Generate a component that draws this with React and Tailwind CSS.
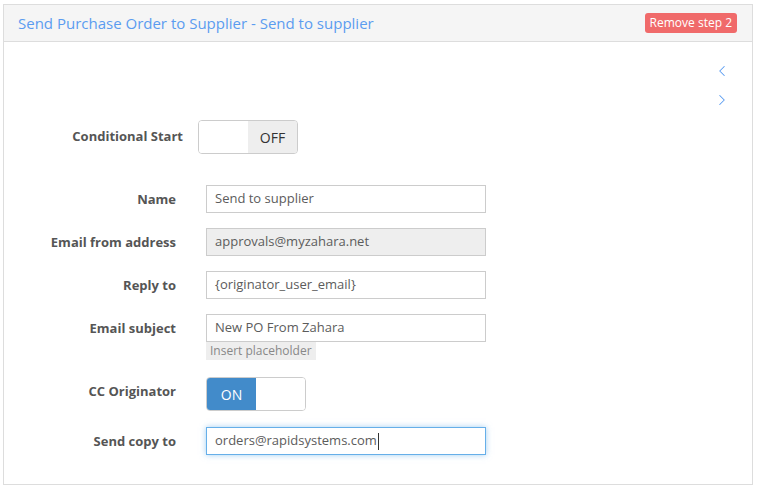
import { ChevronLeft, ChevronRight } from "lucide-react";

const fields = [
  { label: "Name", value: "Send to supplier" },
  { label: "Email from address", value: "approvals@myzahara.net", disabled: true },
  { label: "Reply to", value: "{originator_user_email}" },
];

function Toggle({ on }) {
  return (
    <div className="flex h-[34px] w-[100px] overflow-hidden rounded-[4px] border border-[#ccc] text-[14px]">
      {on ? (
        <>
          <span className="flex w-1/2 items-center justify-center bg-[#428bca] text-white">ON</span>
          <span className="w-1/2 bg-white" />
        </>
      ) : (
        <>
          <span className="w-1/2 bg-white" />
          <span className="flex w-1/2 items-center justify-center bg-[#eee] text-[#333]">OFF</span>
        </>
      )}
    </div>
  );
}

function Row({ label, children, className = "" }) {
  return (
    <div className={`flex items-start ${className}`}>
      <label className="w-[172px] shrink-0 pt-[5px] text-right text-[13px] font-bold text-[#555]">
        {label}
      </label>
      <div className="ml-[30px]">{children}</div>
    </div>
  );
}

function Input({ value, disabled, focused }) {
  return (
    <div
      className={`flex h-[28px] w-[280px] items-center border px-[8px] text-[13px] text-[#5c5c5c] ${
        disabled ? "bg-[#eee]" : "bg-white"
      } ${
        focused
          ? "border-[#66afe9] shadow-[0_0_6px_rgba(102,175,233,0.6)]"
          : "border-[#ccc]"
      }`}
    >
      {value}
      {focused && <span className="ml-[1px] h-[17px] w-px bg-[#333]" />}
    </div>
  );
}

export default function App() {
  return (
    <div className="h-[489px] w-[757px] bg-white pl-[3px] pt-[4px] font-['Open_Sans',sans-serif]">
      <div className="h-[481px] w-[750px] border border-[#ddd] bg-white">
        <div className="flex h-[37px] items-center justify-between border-b border-[#ddd] bg-[#f5f5f5] pl-[14px] pr-[15px]">
          <h1 className="text-[15px] text-[#5b9cf0]">Send Purchase Order to Supplier - Send to supplier</h1>
          <span className="rounded-[3px] bg-[#f06a6a] px-[5px] py-[1px] text-[12px] text-white">
            Remove step 2
          </span>
        </div>

        <div className="flex flex-col items-end pr-[21px] pt-[20px] text-[#5b9cf0]">
          <ChevronLeft size={18} strokeWidth={1.4} />
          <ChevronRight size={18} strokeWidth={1.4} className="mt-[11px]" />
        </div>

        <div className="mt-[11px] flex items-center">
          <label className="w-[179px] text-right text-[13px] font-bold text-[#555]">Conditional Start</label>
          <div className="ml-[15px]">
            <Toggle on={false} />
          </div>
        </div>

        <div className="mt-[31px] flex flex-col gap-[15px]">
          {fields.map((f) => (
            <Row key={f.label} label={f.label}>
              <Input value={f.value} disabled={f.disabled} />
            </Row>
          ))}
          <Row label="Email subject">
            <Input value="New PO From Zahara" />
            <div className="w-fit bg-[#eee] px-[4px] text-[12px] leading-[18px] text-[#888]">
              Insert placeholder
            </div>
          </Row>
        </div>

        <Row label="CC Originator" className="mt-[17px]">
          <Toggle on />
        </Row>

        <Row label="Send copy to" className="mt-[16px]">
          <Input value="orders@rapidsystems.com" focused />
        </Row>
      </div>
    </div>
  );
}
